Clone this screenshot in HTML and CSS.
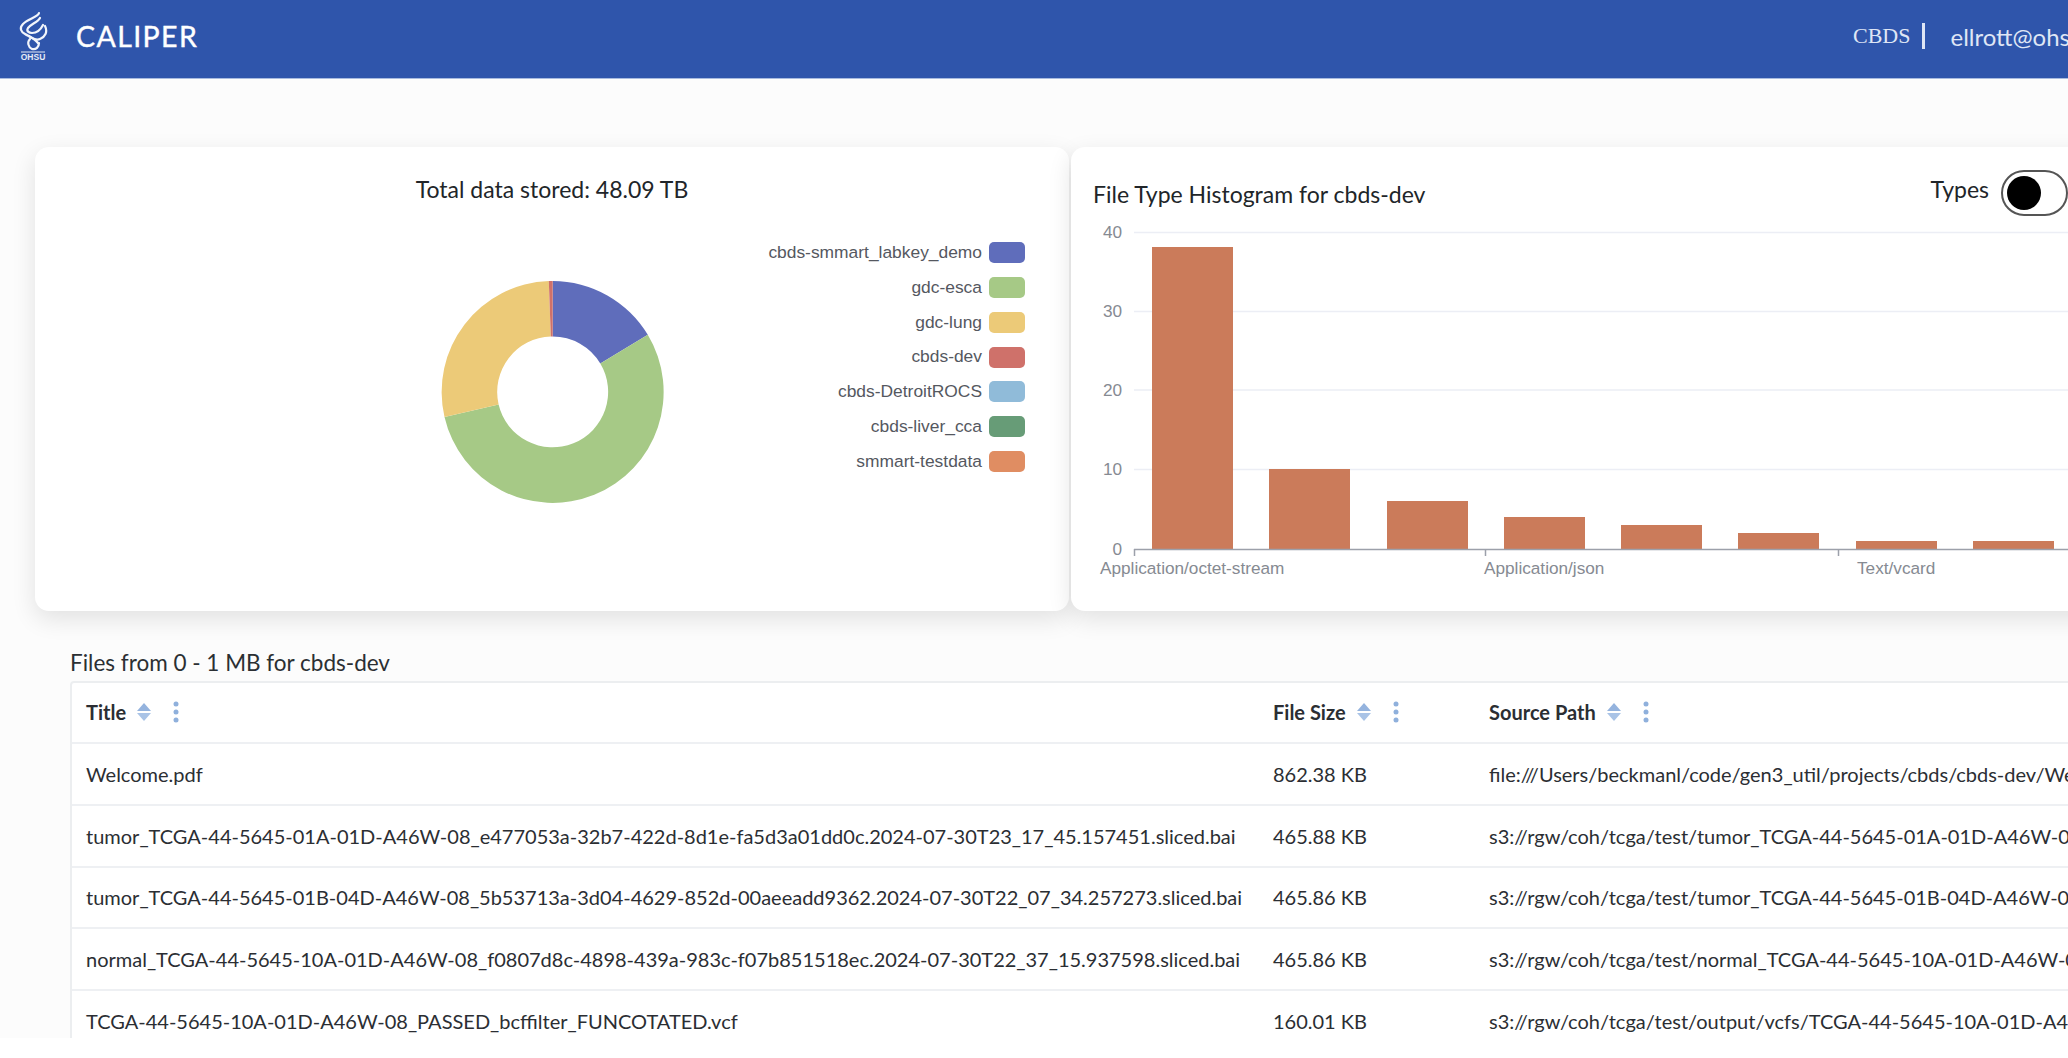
FILE: index.html
```html
<!DOCTYPE html>
<html lang="en">
<head>
<meta charset="utf-8">
<title>Caliper</title>
<link rel="stylesheet" href="styles.css">
</head>
<body>
<div class="app">
  <header class="topbar">
    <div class="brand">
      <svg class="logo" viewBox="0 0 30 52" aria-label="OHSU logo">
        <g fill="none" stroke="#f2f5fb" stroke-width="2.2" stroke-linecap="round">
          <path d="M21 3C20 7 10 9 5 14C1 18 3 22 7 24C12 27 17 29 20 33"/>
          <path d="M22 8C20 12 13 14 10 18C8 21 11 23 14 23C19 23 23 19 25 15"/>
          <path d="M27 16C30 22 27 27 22 29C18 31 14 28 11 26"/>
          <path d="M12 29C9 32 10 37 14 39C18 40 21 37 21 33"/>
        </g>
        <path d="M3 42H27" stroke="#e6ebf6" stroke-width="1"/>
        <text x="15" y="50" class="logo-text" text-anchor="middle">OHSU</text>
      </svg>
      <span class="app-name">CALIPER</span>
    </div>
    <nav class="account">
      <span class="project">CBDS</span>
      <span class="divider"></span>
      <span class="user">ellrott@ohsu.edu</span>
    </nav>
  </header>

  <main class="content">
    <section class="cards">
      <article class="card card-total">
        <h2 class="card-title centered">Total data stored: 48.09 TB</h2>
        <svg class="chart-total" viewBox="35 210 1034 401">
          <g>
            <path fill="#5f6dbb" d="M552.7 281A111 111 0 0 1 647.8 334.8L600.3 363.4A55.5 55.5 0 0 0 552.7 336.5Z"/>
            <path fill="#a6c986" d="M647.8 334.8A111 111 0 1 1 444.5 417L498.6 404.5A55.5 55.5 0 1 0 600.3 363.4Z"/>
            <path fill="#ecca78" d="M444.5 417A111 111 0 0 1 548.8 281L550.8 336.5A55.5 55.5 0 0 0 498.6 404.5Z"/>
            <path fill="#cf716a" d="M548.8 281A111 111 0 0 1 552.7 281V336.5A55.5 55.5 0 0 0 550.8 336.5Z"/>
          </g>
          <g class="legend-text" text-anchor="end">
            <text x="982" y="258">cbds-smmart_labkey_demo</text>
            <text x="982" y="293">gdc-esca</text>
            <text x="982" y="328">gdc-lung</text>
            <text x="982" y="362">cbds-dev</text>
            <text x="982" y="397">cbds-DetroitROCS</text>
            <text x="982" y="432">cbds-liver_cca</text>
            <text x="982" y="467">smmart-testdata</text>
          </g>
          <g>
            <rect x="989" y="242" width="36" height="21" rx="5" fill="#5f6dbb"/>
            <rect x="989" y="277" width="36" height="21" rx="5" fill="#a6c986"/>
            <rect x="989" y="312" width="36" height="21" rx="5" fill="#ecca78"/>
            <rect x="989" y="347" width="36" height="21" rx="5" fill="#cf716a"/>
            <rect x="989" y="381" width="36" height="21" rx="5" fill="#90bbd9"/>
            <rect x="989" y="416" width="36" height="21" rx="5" fill="#679c77"/>
            <rect x="989" y="451" width="36" height="21" rx="5" fill="#e08d62"/>
          </g>
        </svg>
      </article>

      <article class="card card-hist">
        <div class="hist-head">
          <h2 class="card-title">File Type Histogram for cbds-dev</h2>
          <label class="types">
            <span>Types</span>
            <span class="toggle"><span class="knob"></span></span>
          </label>
        </div>
        <svg class="chart-hist" viewBox="1071 220 997 391">
          <g class="grid">
            <path d="M1134 232.5H2068M1134 311.5H2068M1134 390H2068M1134 469.5H2068"/>
          </g>
          <g class="axis-y" text-anchor="end">
            <text x="1122" y="238">40</text>
            <text x="1122" y="317">30</text>
            <text x="1122" y="396">20</text>
            <text x="1122" y="475">10</text>
            <text x="1122" y="555">0</text>
          </g>
          <g fill="#cb7b5a">
            <rect x="1152" y="247" width="81" height="302"/>
            <rect x="1269" y="469" width="81" height="80"/>
            <rect x="1387" y="501" width="81" height="48"/>
            <rect x="1504" y="517" width="81" height="32"/>
            <rect x="1621" y="525" width="81" height="24"/>
            <rect x="1738" y="533" width="81" height="16"/>
            <rect x="1856" y="541" width="81" height="8"/>
            <rect x="1973" y="541" width="81" height="8"/>
          </g>
          <path class="axis" d="M1134 549.5H2068M1134.5 549V556M1485.5 549V556M1838.5 549V556"/>
          <g class="axis-x">
            <text x="1100" y="574">Application/octet-stream</text>
            <text x="1484" y="574">Application/json</text>
            <text x="1857" y="574">Text/vcard</text>
          </g>
        </svg>
      </article>
    </section>

    <section class="files">
      <h3 class="files-title">Files from 0 - 1 MB for cbds-dev</h3>
      <div class="table" role="table">
        <div class="row head" role="row">
          <div class="cell col-title">Title
            <svg class="sort" viewBox="0 0 14 18"><path d="M7 0L14 8H0Z"/><path class="sort-low" d="M0 10H14L7 18Z"/></svg>
            <svg class="dots dots-title" viewBox="0 0 6 22"><circle cx="3" cy="3" r="2.5"/><circle cx="3" cy="11" r="2.5"/><circle cx="3" cy="19" r="2.5"/></svg>
          </div>
          <div class="cell col-size">File Size
            <svg class="sort" viewBox="0 0 14 18"><path d="M7 0L14 8H0Z"/><path class="sort-low" d="M0 10H14L7 18Z"/></svg>
            <svg class="dots" viewBox="0 0 6 22"><circle cx="3" cy="3" r="2.5"/><circle cx="3" cy="11" r="2.5"/><circle cx="3" cy="19" r="2.5"/></svg>
          </div>
          <div class="cell col-path">Source Path
            <svg class="sort" viewBox="0 0 14 18"><path d="M7 0L14 8H0Z"/><path class="sort-low" d="M0 10H14L7 18Z"/></svg>
            <svg class="dots" viewBox="0 0 6 22"><circle cx="3" cy="3" r="2.5"/><circle cx="3" cy="11" r="2.5"/><circle cx="3" cy="19" r="2.5"/></svg>
          </div>
        </div>
        <div class="row" role="row">
          <div class="cell col-title">Welcome.pdf</div>
          <div class="cell col-size">862.38 KB</div>
          <div class="cell col-path">file:///Users/beckmanl/code/gen3_util/projects/cbds/cbds-dev/Welcome.pdf</div>
        </div>
        <div class="row" role="row">
          <div class="cell col-title">tumor_TCGA-44-5645-01A-01D-A46W-08_e477053a-32b7-422d-8d1e-fa5d3a01dd0c.2024-07-30T23_17_45.157451.sliced.bai</div>
          <div class="cell col-size">465.88 KB</div>
          <div class="cell col-path">s3://rgw/coh/tcga/test/tumor_TCGA-44-5645-01A-01D-A46W-08_e477053a-32b7-422d-8d1e-fa5d3a01dd0c.2024-07-30T23_17_45.157451.sliced.bai</div>
        </div>
        <div class="row" role="row">
          <div class="cell col-title">tumor_TCGA-44-5645-01B-04D-A46W-08_5b53713a-3d04-4629-852d-00aeeadd9362.2024-07-30T22_07_34.257273.sliced.bai</div>
          <div class="cell col-size">465.86 KB</div>
          <div class="cell col-path">s3://rgw/coh/tcga/test/tumor_TCGA-44-5645-01B-04D-A46W-08_5b53713a-3d04-4629-852d-00aeeadd9362.2024-07-30T22_07_34.257273.sliced.bai</div>
        </div>
        <div class="row" role="row">
          <div class="cell col-title">normal_TCGA-44-5645-10A-01D-A46W-08_f0807d8c-4898-439a-983c-f07b851518ec.2024-07-30T22_37_15.937598.sliced.bai</div>
          <div class="cell col-size">465.86 KB</div>
          <div class="cell col-path">s3://rgw/coh/tcga/test/normal_TCGA-44-5645-10A-01D-A46W-08_f0807d8c-4898-439a-983c-f07b851518ec.2024-07-30T22_37_15.937598.sliced.bai</div>
        </div>
        <div class="row" role="row">
          <div class="cell col-title">TCGA-44-5645-10A-01D-A46W-08_PASSED_bcffilter_FUNCOTATED.vcf</div>
          <div class="cell col-size">160.01 KB</div>
          <div class="cell col-path">s3://rgw/coh/tcga/test/output/vcfs/TCGA-44-5645-10A-01D-A46W-08_PASSED_bcffilter_FUNCOTATED.vcf</div>
        </div>
      </div>
    </section>
  </main>
</div>
</body>
</html>
```
FILE: styles.css
```css
* { box-sizing: border-box; }
html, body { margin: 0; height: 100%; overflow: hidden; background: #fff; }
body { font-family: Lato, "Liberation Sans", sans-serif; color: #212529; }

.app { width: 2068px; height: 1038px; overflow: hidden; background: #fcfcfc; }

.topbar {
  height: 79px;
  padding-bottom: 6px;
  background: #2f55ab;
  border-bottom: 1px solid #a9bbdf;
  display: flex;
  align-items: center;
  justify-content: space-between;
  color: #fff;
}
.brand { display: flex; align-items: center; padding-left: 18px; }
.logo { width: 30px; height: 52px; }
.logo-text { font-size: 8.5px; font-weight: 700; fill: #e6ebf6; font-family: "Liberation Sans", sans-serif; }
.app-name { margin-left: 28px; font-size: 28.5px; letter-spacing: 1.4px; -webkit-text-stroke: .4px #fff; }

.account { display: flex; align-items: center; width: 215px; flex: none; color: #dfe6f5; }
.project { flex: none; font-family: "Liberation Serif", serif; font-size: 22px; }
.divider { flex: none; width: 3px; height: 26px; margin-left: 12px; background: #dfe6f5; }
.user { flex: none; margin-left: 25px; font-size: 24px; white-space: nowrap; }

.content { padding: 68px 0 0 35px; }

.cards { display: flex; gap: 2px; width: 2100px; height: 464px; }
.card {
  height: 464px;
  background: #fff;
  border-radius: 14px;
  box-shadow: 0 8px 24px rgba(0,0,0,.11);
}
.card-total { width: 1034px; flex: none; }
.card-hist { flex: 1; }

.card-title { margin: 0; font-size: 23px; font-weight: 400; line-height: 28px; color: #212529; }
.centered { text-align: center; padding-top: 28px; }

.chart-total { display: block; width: 1034px; height: 401px; margin-top: 7px; }
.chart-total text { font-family: "Liberation Sans", sans-serif; font-size: 17.4px; fill: #55585f; }

.hist-head { display: flex; justify-content: space-between; width: 997px; height: 73px; padding-left: 22px; }
.hist-head .card-title { padding-top: 33px; }
.types { display: flex; align-items: flex-start; gap: 12px; padding-top: 23px; font-size: 23px; }
.types > span:first-child { padding-top: 5px; line-height: 28px; }
.toggle {
  width: 67px; height: 46px;
  border: 2px solid #555;
  border-radius: 23px;
  background: #fff;
  padding: 4px;
  display: block;
}
.knob { display: block; width: 34px; height: 34px; border-radius: 50%; background: #000; }

.chart-hist { display: block; width: 997px; height: 391px; }
.grid path { stroke: #eceef5; stroke-width: 1.5; fill: none; }
.axis { stroke: #9ca0aa; stroke-width: 1.5; fill: none; }
.chart-hist text { font-family: "Liberation Sans", sans-serif; font-size: 17.2px; fill: #868a92; }

.files { width: 2100px; padding: 38px 0 0 35px; }
.files-title { margin: 0; height: 32px; line-height: 28px; font-size: 22.5px; font-weight: 400; color: #2b2f33; }

.table { background: #fff; border: 2px solid #eceef0; border-radius: 4px; width: 2100px; }
.row { display: flex; height: 61.75px; border-bottom: 2px solid #eef0f3; }
.row.head { font-weight: 700; height: 61px; }
.row.head .cell { padding-bottom: 2px; }
.cell { display: flex; align-items: center; padding-left: 14px; font-size: 20px; color: #2b2e33; white-space: nowrap; }
.col-title { width: 1187px; flex: none; }
.col-size { width: 216px; flex: none; }
.col-path { flex: 1; }

.sort { width: 14px; height: 18px; margin-left: 11px; fill: #94b3de; }
.sort-low { fill: #a9c3e6; }
.dots { width: 6px; height: 22px; margin-left: 22px; fill: #8fb0dc; }
```
